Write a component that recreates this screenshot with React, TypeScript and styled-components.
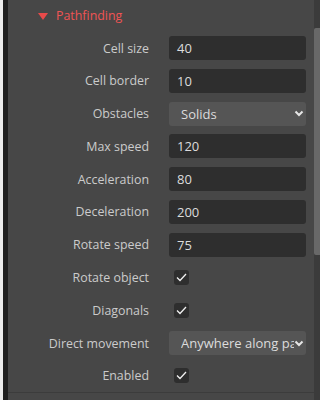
import styled, {createGlobalStyle} from 'styled-components';

const GlobalStyle = createGlobalStyle`
  html, body {
    margin: 0;
    padding: 0;
    height: 400px;
    overflow: hidden;
    background: #474747;
  }
  body {
    font-family: 'Segoe UI', 'Open Sans', 'Noto Sans', sans-serif;
  }
`;

type Field =
  | {label: string; kind: 'number'; value: string}
  | {label: string; kind: 'select'; value: string}
  | {label: string; kind: 'check'; checked: boolean};

const fields: Field[] = [
  {label: 'Cell size', kind: 'number', value: '40'},
  {label: 'Cell border', kind: 'number', value: '10'},
  {label: 'Obstacles', kind: 'select', value: 'Solids'},
  {label: 'Max speed', kind: 'number', value: '120'},
  {label: 'Acceleration', kind: 'number', value: '80'},
  {label: 'Deceleration', kind: 'number', value: '200'},
  {label: 'Rotate speed', kind: 'number', value: '75'},
  {label: 'Rotate object', kind: 'check', checked: true},
  {label: 'Diagonals', kind: 'check', checked: true},
  {label: 'Direct movement', kind: 'select', value: 'Anywhere along path'},
  {label: 'Enabled', kind: 'check', checked: true},
];

function Chevron() {
  return (
    <svg width="10" height="7" viewBox="0 0 10 7">
      <polyline points="1.5,1.5 5,5 8.5,1.5" fill="none" stroke="#e6e6e6" strokeWidth="2" />
    </svg>
  );
}

function Tick() {
  return (
    <svg width="15" height="15" viewBox="0 0 15 15">
      <polyline points="3,7.5 6,10.5 12,4" fill="none" stroke="#f0f0f0" strokeWidth="1.3" />
    </svg>
  );
}

function Control({field}: {field: Field}) {
  if (field.kind === 'number') return <NumberBox>{field.value}</NumberBox>;
  if (field.kind === 'select')
    return (
      <SelectBox>
        <SelectText>{field.value}</SelectText>
        <ChevronSlot>
          <Chevron />
        </ChevronSlot>
      </SelectBox>
    );
  return <CheckBox>{field.checked && <Tick />}</CheckBox>;
}

export default function App() {
  return (
    <>
      <GlobalStyle />
      <Page>
        <LightEdge />
        <DarkEdge />
        <Panel>
          <Header>
            <Triangle />
            <Title>Pathfinding</Title>
          </Header>
          <Rows>
            {fields.map((f) => (
              <Row key={f.label}>
                <Label>{f.label}</Label>
                <Control field={f} />
              </Row>
            ))}
          </Rows>
          <Divider />
        </Panel>
        <Track>
          <Thumb />
        </Track>
      </Page>
    </>
  );
}

const Page = styled.div`
  display: flex;
  width: 320px;
  height: 400px;
  background: #474747;
`;

const LightEdge = styled.div`
  width: 3px;
  background: #ececec;
`;

const DarkEdge = styled.div`
  width: 5px;
  background: #1f1f1f;
`;

const Panel = styled.div`
  flex: 1;
  display: flex;
  flex-direction: column;
  background: #474747;
  min-width: 0;
`;

const Header = styled.div`
  height: 36px;
  display: flex;
  align-items: flex-start;
  padding-left: 30px;
  box-sizing: border-box;
`;

const Triangle = styled.div`
  width: 0;
  height: 0;
  margin-top: 13px;
  border-left: 5px solid transparent;
  border-right: 5px solid transparent;
  border-top: 7px solid #e84a4a;
`;

const Title = styled.span`
  margin-left: 8px;
  margin-top: 6px;
  font-size: 12.4px;
  line-height: 20px;
  color: #f05454;
`;

const Rows = styled.div`
  display: flex;
  flex-direction: column;
  gap: 8.8px;
`;

const Row = styled.div`
  display: grid;
  grid-template-columns: 141px 136.5px;
  column-gap: 20px;
  align-items: center;
  height: 24px;
`;

const Label = styled.span`
  text-align: right;
  font-size: 12.4px;
  color: #cbcbcb;
  white-space: nowrap;
`;

const NumberBox = styled.div`
  height: 24px;
  box-sizing: border-box;
  background: #2e2e2e;
  border-radius: 3px;
  padding-left: 8px;
  font-size: 13px;
  line-height: 24px;
  color: #dcdcdc;
`;

const SelectBox = styled.div`
  height: 24px;
  box-sizing: border-box;
  background: #555555;
  border-radius: 3px;
  padding-left: 12px;
  display: flex;
  align-items: center;
  overflow: hidden;
`;

const SelectText = styled.span`
  flex: 1;
  min-width: 0;
  overflow: hidden;
  white-space: nowrap;
  font-size: 13px;
  color: #dcdcdc;
`;

const ChevronSlot = styled.span`
  width: 12px;
  display: flex;
  align-items: center;
  flex-shrink: 0;
`;

const CheckBox = styled.div`
  width: 15px;
  height: 15px;
  margin-left: 5px;
  background: #2e2e2e;
  border-radius: 3px;
  display: flex;
`;

const Divider = styled.div`
  margin-top: 4px;
  height: 1px;
  background: #3c3c3c;
`;

const Track = styled.div`
  width: 6px;
  background: #3b3b3b;
  display: flex;
  flex-direction: column;
  padding-top: 28px;
  box-sizing: border-box;
`;

const Thumb = styled.div`
  height: 227px;
  background: #686868;
  border-radius: 2px 0 0 2px;
`;
